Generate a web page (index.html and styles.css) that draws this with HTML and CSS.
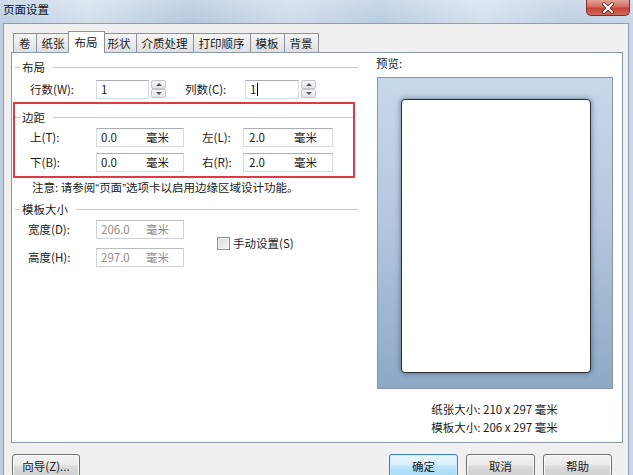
FILE: index.html
```html
<!DOCTYPE html>
<html lang="zh-CN">
<head>
<meta charset="utf-8">
<title>页面设置</title>
<link rel="stylesheet" href="styles.css">
</head>
<body>
<div class="window">
  <div class="titlebar">
    <span class="title">页面设置</span>
    <div class="close">
      <svg width="14" height="12" viewBox="0 0 14 12">
        <path d="M3 2 L11 10 M11 2 L3 10" stroke="#5a2a28" stroke-width="3.6" stroke-linecap="square"/>
        <path d="M3 2 L11 10 M11 2 L3 10" stroke="#ffffff" stroke-width="2" stroke-linecap="square"/>
      </svg>
    </div>
  </div>
  <div class="frame">
    <div class="dialog">
      <div class="tabs">
        <div class="tab">卷</div>
        <div class="tab">纸张</div>
        <div class="tab active">布局</div>
        <div class="tab">形状</div>
        <div class="tab">介质处理</div>
        <div class="tab">打印顺序</div>
        <div class="tab">模板</div>
        <div class="tab">背景</div>
      </div>
      <div class="panel">
        <div class="left">
          <div class="group-head g1"><span class="dash"></span><span>布局</span><span class="gline"></span></div>
          <div class="row r1">
            <span class="lbl lbl-a">行数(W):</span>
            <div class="tb tb-n">1</div>
            <div class="spin"><span class="up"></span><span class="down"></span></div>
            <span class="lbl lbl-c">列数(C):</span>
            <div class="tb tb-n2">1<span class="caret"></span></div>
            <div class="spin"><span class="up"></span><span class="down"></span></div>
          </div>

          <div class="margins">
            <div class="highlight"></div>
            <div class="group-head"><span class="dash"></span><span>边距</span><span class="gline short"></span></div>
            <div class="row r2">
              <span class="lbl lbl-a">上(T):</span>
              <div class="tb tb-u"><span class="val">0.0</span><span>毫米</span></div>
              <span class="lbl lbl-b">左(L):</span>
              <div class="tb tb-u2"><span class="val">2.0</span><span>毫米</span></div>
            </div>
            <div class="row r3">
              <span class="lbl lbl-a">下(B):</span>
              <div class="tb tb-u"><span class="val">0.0</span><span>毫米</span></div>
              <span class="lbl lbl-b">右(R):</span>
              <div class="tb tb-u2"><span class="val">2.0</span><span>毫米</span></div>
            </div>
          </div>

          <div class="note">注意: 请参阅<span class="q">“</span>页面<span class="q">”</span>选项卡以启用边缘区域设计功能。</div>

          <div class="group-head g3"><span class="dash"></span><span>模板大小</span><span class="gline"></span></div>
          <div class="tpl">
            <div class="tpl-rows">
              <div class="row">
                <span class="lbl lbl-d">宽度(D):</span>
                <div class="tb tb-u disabled"><span class="val">206.0</span><span>毫米</span></div>
              </div>
              <div class="row r5">
                <span class="lbl lbl-d">高度(H):</span>
                <div class="tb tb-u disabled"><span class="val">297.0</span><span>毫米</span></div>
              </div>
            </div>
            <div class="check"><span class="box"></span><span>手动设置(S)</span></div>
          </div>
        </div>

        <div class="right">
          <div class="preview-label">预览:</div>
          <div class="preview"><div class="page"></div></div>
          <div class="info first">纸张大小: 210 x 297 毫米</div>
          <div class="info">模板大小: 206 x 297 毫米</div>
        </div>
      </div>
      <div class="buttons">
        <div class="btn btn-wiz">向导(Z)...</div>
        <div class="btn btn-ok">确定</div>
        <div class="btn">取消</div>
        <div class="btn">帮助</div>
      </div>
    </div>
  </div>
</div>
</body>
</html>
```

FILE: styles.css
```css
* { box-sizing: border-box; }
html, body { margin: 0; padding: 0; }
body {
  width: 633px;
  height: 475px;
  overflow: hidden;
  font-family: "Noto Sans CJK SC", "Noto Sans", sans-serif;
  font-size: 11.5px;
  color: #1b1b1b;
  background: #c0d1e4;
}
.window {
  width: 633px;
  height: 475px;
  overflow: hidden;
  background:
    linear-gradient(180deg, rgba(255,255,255,0.25) 0px, rgba(255,255,255,0) 23px),
    linear-gradient(90deg, #bccfe3 0%, #d3dfeb 14%, #b4c8de 30%, #cfdbe9 46%, #b9cce1 60%, #d5e0ec 76%, #bdcfe3 90%, #c8d7e8 100%);
}
.titlebar {
  height: 23px;
  display: flex;
  justify-content: space-between;
  align-items: flex-start;
}
.title {
  padding: 2px 0 0 3px;
  line-height: 14px;
  color: #111;
}
.close {
  width: 44px;
  height: 16px;
  margin-right: 3px;
  border: 1px solid #6f3431;
  border-top: none;
  border-radius: 0 0 5px 5px;
  background: linear-gradient(180deg, #e7a397 0%, #d66c60 45%, #c6423a 55%, #d26a5d 100%);
  display: flex;
  align-items: center;
  justify-content: center;
}
.frame {
  padding: 0 4px 0 3px;
}
.dialog {
  height: 452px;
  background: #f0f0f0;
  border: 1px solid #8e9fb3;
  border-bottom: none;
  padding: 7px 5px 0 7px;
}

/* tabs */
.tabs {
  display: flex;
  height: 21px;
  padding-left: 2px;
  align-items: flex-start;
}
.tab {
  margin-top: 2px;
  height: 19px;
  padding: 0 5px;
  border: 1px solid #8d9199;
  border-bottom: none;
  background: linear-gradient(180deg, #f5f5f5 0%, #ebebeb 50%, #dfdfdf 100%);
  line-height: 18px;
  margin-left: -1px;
}
.tab:first-child { margin-left: 0; }
.tab.active {
  margin: 0 -2px -1px -3px;
  height: 22px;
  padding: 0 6px;
  background: #ffffff;
  line-height: 21px;
  position: relative;
  z-index: 1;
}

/* panel */
.panel {
  height: 391px;
  background: #ffffff;
  border: 1px solid #8d9aa6;
  display: flex;
}
.left {
  width: 346px;
}
.group-head {
  height: 14px;
  line-height: 14px;
  display: flex;
  align-items: center;
  padding-left: 3px;
}
.g1 { margin-top: 7px; }
.g3 { margin-top: 7px; }
.dash {
  width: 5px;
  height: 1px;
  background: #c7cbd0;
  margin-right: 2px;
}
.gline {
  flex: 1;
  height: 1px;
  margin-left: 8px;
  background: #c7cbd0;
}
.gline.short { margin-right: 4px; }

.row {
  height: 20px;
  display: flex;
  align-items: center;
  padding-left: 18px;
}
.r1 { margin-top: 5px; }
.r2 { margin-top: 3px; }
.r3 { margin-top: 5px; }
.r5 { margin-top: 8px; }
.lbl { line-height: 14px; white-space: nowrap; }
.lbl-a { width: 66px; }
.lbl-b { width: 41px; margin-left: 18px; }
.lbl-c { width: 60px; margin-left: 19px; }
.lbl-d { width: 66px; margin-left: -2px; margin-right: 2px; }

.tb {
  height: 19px;
  border: 1px solid #d5dae0;
  border-top-color: #abadb3;
  background: #ffffff;
  display: flex;
  align-items: center;
  padding-left: 4px;
  line-height: 14px;
  white-space: nowrap;
}
.tb-n { width: 53px; }
.tb-n2 { width: 54px; }
.tb-u { width: 88px; }
.tb-u2 { width: 90px; }
.tb .val { width: 45px; }
.tb-u2 .val { width: 46px; padding-left: 1px; }
.tb.disabled { color: #8e8e8e; border-color: #cfd2d6; border-top-color: #b9bcc1; }
.caret {
  display: inline-block;
  width: 1px;
  height: 13px;
  background: #000;
  margin-left: 1px;
}

.spin {
  width: 15px;
  height: 18px;
  margin-left: 2px;
  display: flex;
  flex-direction: column;
}
.spin span {
  flex: 1;
  border: 1px solid #c3c7cc;
  border-radius: 2px;
  background: linear-gradient(180deg, #f7f7f7, #e4e4e4);
  display: flex;
  align-items: center;
  justify-content: center;
}
.spin .up::after {
  content: "";
  border-left: 3px solid transparent;
  border-right: 3px solid transparent;
  border-bottom: 3px solid #555b63;
}
.spin .down::after {
  content: "";
  border-left: 3px solid transparent;
  border-right: 3px solid transparent;
  border-top: 3px solid #555b63;
}

.margins {
  position: relative;
  margin-top: 11px;
}
.highlight {
  position: absolute;
  top: -8px;
  left: 1px;
  width: 342px;
  height: 76px;
  border: 2px solid #dd3b41;
  pointer-events: none;
}
.note {
  margin-top: 8px;
  padding-left: 20px;
  line-height: 14px;
  white-space: nowrap;
}
.note .q {
  font-family: "Liberation Sans", sans-serif;
}

.tpl {
  margin-top: 3px;
  display: flex;
  align-items: center;
}
.check {
  margin-left: 33px;
  display: flex;
  align-items: center;
  line-height: 14px;
}
.check .box {
  width: 13px;
  height: 13px;
  border: 1px solid #8f8f8f;
  background: linear-gradient(135deg, #dcdcdc, #f6f6f6);
  box-shadow: inset 0 0 0 1px #f4f4f4;
  margin-right: 3px;
}

/* right */
.right {
  width: 237px;
  margin-left: 18px;
  padding-top: 3px;
}
.preview-label { line-height: 14px; }
.preview {
  margin-top: 7px;
  margin-left: 1px;
  width: 236px;
  height: 312px;
  border: 1px solid #8797aa;
  background: linear-gradient(180deg, #c8d8eb 0%, #b5c8df 45%, #8ea8c6 100%);
  padding: 21px 0 0 23px;
}
.page {
  width: 190px;
  height: 274px;
  background: #ffffff;
  border: 1.5px solid #2a2d31;
  border-radius: 4px;
  box-shadow: 0 0 5px 1px rgba(45, 60, 80, 0.45);
}
.info {
  text-align: center;
  line-height: 18px;
}
.info.first { margin-top: 11px; }

/* buttons */
.buttons {
  margin-top: 11px;
  display: flex;
  gap: 8px;
  padding: 0 11px 0 1px;
}
.btn {
  width: 69px;
  height: 23px;
  border: 1px solid #707070;
  border-radius: 3px;
  background: linear-gradient(180deg, #f2f2f2 0%, #ebebeb 48%, #dddddd 52%, #cfcfcf 100%);
  box-shadow: inset 0 0 0 1px #fbfbfb;
  display: flex;
  align-items: center;
  justify-content: center;
  line-height: 14px;
}
.btn-wiz { width: 68px; margin-right: auto; }
.btn-ok {
  border-color: #3c7fb1;
  background: linear-gradient(180deg, #eaf6fd 0%, #d9f0fc 48%, #bee6fd 52%, #a7d9f5 100%);
  box-shadow: inset 0 0 0 1px #d0ecfb;
}
```
